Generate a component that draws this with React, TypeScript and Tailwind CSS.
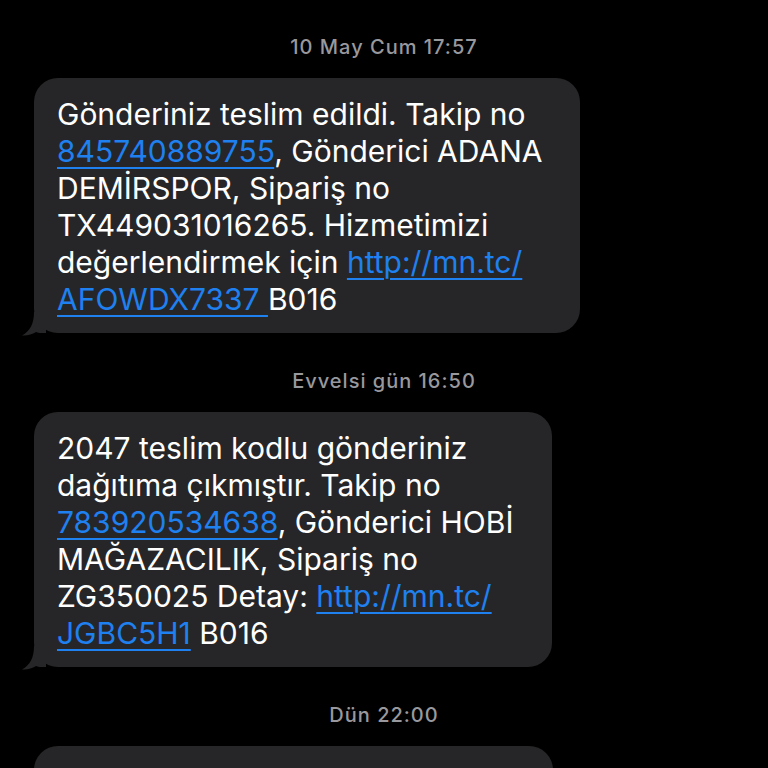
import React from 'react';

type Part = string | { link: string };
type Line = Part[];

const MESSAGES: { stamp: string; width: string; lines: Line[] }[] = [
  {
    stamp: '10 May Cum 17:57',
    width: 'w-[546px]',
    lines: [
      ['Gönderiniz teslim edildi. Takip no'],
      [{ link: '845740889755' }, ', Gönderici ADANA'],
      ['DEMİRSPOR, Sipariş no'],
      ['TX449031016265. Hizmetimizi'],
      ['değerlendirmek için ', { link: 'http://mn.tc/' }],
      [{ link: 'AFOWDX7337 ' }, 'B016'],
    ],
  },
  {
    stamp: 'Evvelsi gün 16:50',
    width: 'w-[518px]',
    lines: [
      ['2047 teslim kodlu gönderiniz'],
      ['dağıtıma çıkmıştır. Takip no'],
      [{ link: '783920534638' }, ', Gönderici HOBİ'],
      ['MAĞAZACILIK, Sipariş no'],
      ['ZG350025 Detay: ', { link: 'http://mn.tc/' }],
      [{ link: 'JGBC5H1' }, ' B016'],
    ],
  },
];

function Tail() {
  return (
    <svg
      className="absolute -left-[12px] -bottom-[3px]"
      width="24"
      height="24"
      viewBox="0 0 24 24"
      aria-hidden
    >
      <path
        d="M12 0 C12 12 8 19 0 23.5 C5 24 10 22.5 14 20 C16 21 18 21 24 21 L24 0 Z"
        fill="#262628"
      />
    </svg>
  );
}

function Stamp({ text }: { text: string }) {
  return (
    <div className="h-5 text-center text-[20px] leading-5 tracking-[1px] font-medium text-[#98989d]">
      {text}
    </div>
  );
}

function Bubble({ width, lines }: { width: string; lines: Line[] }) {
  return (
    <div className={`relative ml-[34px] ${width} rounded-[24px] bg-[#262628] pl-[23px] pt-[18px] pb-[15px]`}>
      <Tail />
      <p className="relative whitespace-nowrap text-[30px] leading-[37px] text-white">
        {lines.map((line, i) => (
          <span key={i} className="block">
            {line.map((part, j) =>
              typeof part === 'string' ? (
                <span key={j}>{part}</span>
              ) : (
                <a
                  key={j}
                  className="text-[#1f80f0] underline decoration-2 underline-offset-[5px]"
                >
                  {part.link}
                </a>
              ),
            )}
          </span>
        ))}
      </p>
    </div>
  );
}

export default function App() {
  return (
    <div className="h-[768px] w-[768px] overflow-hidden bg-black font-['Inter',sans-serif] antialiased">
      <div className="pt-[37px]">
        {MESSAGES.map((m, i) => (
          <div key={i} className={i > 0 ? 'pt-[38px]' : ''}>
            <Stamp text={m.stamp} />
            <div className="mt-[21px]">
              <Bubble width={m.width} lines={m.lines} />
            </div>
          </div>
        ))}
        <div className="pt-[38px]">
          <Stamp text="Dün 22:00" />
          <div className="mt-[21px] ml-[34px] h-[80px] w-[519px] rounded-[24px] bg-[#262628]" />
        </div>
      </div>
    </div>
  );
}
